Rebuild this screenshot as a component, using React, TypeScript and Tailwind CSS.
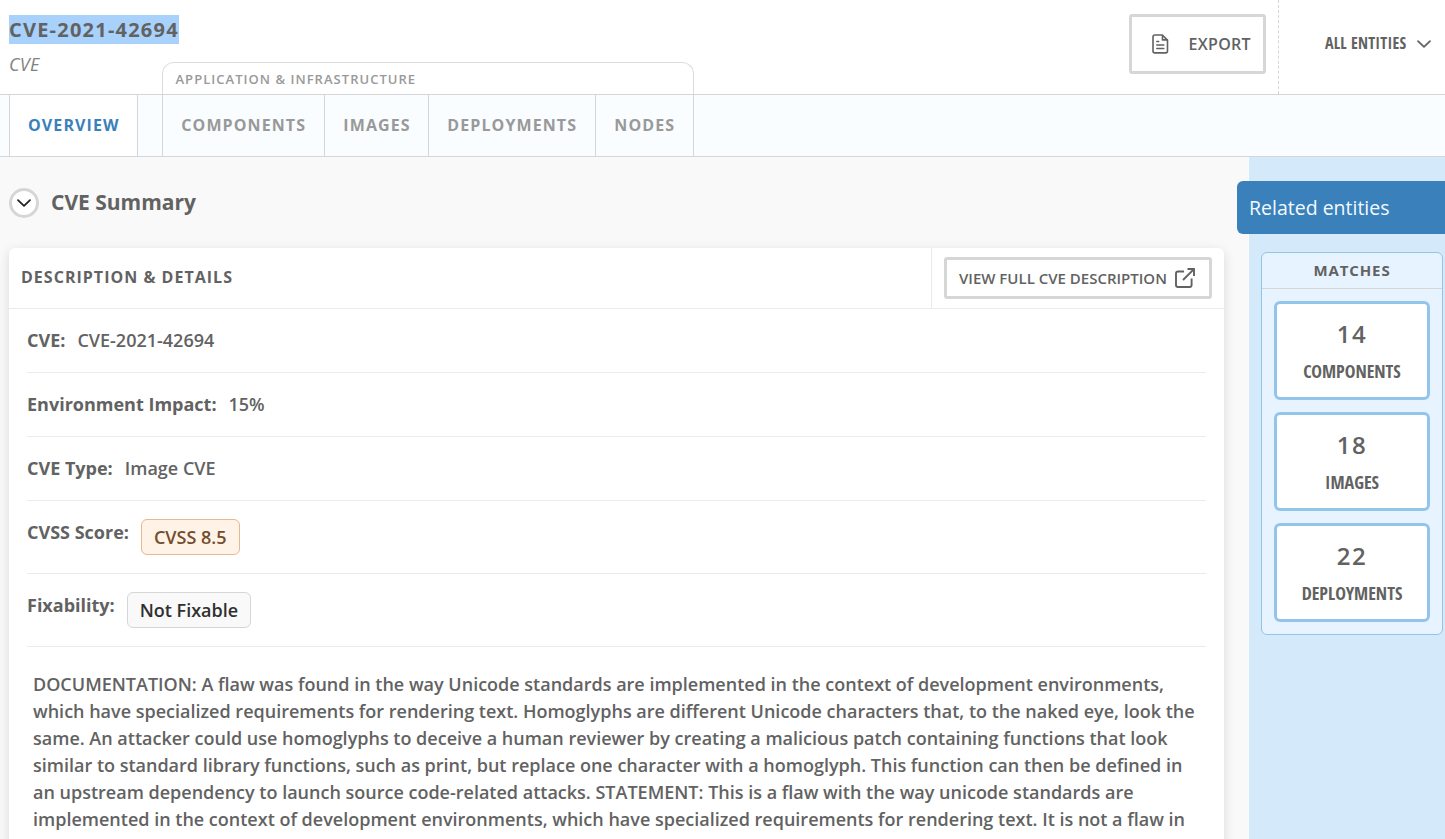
import React from "react";

const tabs = [
  { label: "COMPONENTS", width: "w-[162px]" },
  { label: "IMAGES", width: "w-[104px]" },
  { label: "DEPLOYMENTS", width: "w-[167px]" },
  { label: "NODES", width: "w-[98px]" },
];

const matches = [
  { count: 14, label: "COMPONENTS" },
  { count: 18, label: "IMAGES" },
  { count: 22, label: "DEPLOYMENTS" },
];

const description =
  "DOCUMENTATION: A flaw was found in the way Unicode standards are implemented in the context of development environments, which have specialized requirements for rendering text. Homoglyphs are different Unicode characters that, to the naked eye, look the same. An attacker could use homoglyphs to deceive a human reviewer by creating a malicious patch containing functions that look similar to standard library functions, such as print, but replace one character with a homoglyph. This function can then be defined in an upstream dependency to launch source code-related attacks. STATEMENT: This is a flaw with the way unicode standards are implemented in the context of development environments, which have specialized requirements for rendering text. It is not a flaw in";

function Chevron({ className }: { className: string }) {
  return (
    <svg viewBox="0 0 16 10" fill="none" stroke="currentColor" strokeLinecap="round" strokeLinejoin="round" className={className}>
      <path d="M2 2.200 8 7.900l6-5.700" strokeWidth="1.8" />
    </svg>
  );
}

function FileIcon() {
  return (
    <svg viewBox="0 0 18 20" width="18" height="20" fill="none" stroke="currentColor" strokeWidth="1.6" strokeLinecap="round" strokeLinejoin="round">
      <path d="M3.800 1h7.500l5.200 5.100v11a1.800 1.800 0 0 1-1.800 1.800H3.800A1.800 1.800 0 0 1 2 17.100V2.800A1.800 1.800 0 0 1 3.800 1Z" />
      <path d="M11.500 1.600v4.300h4.500" />
      <path d="M5.800 7.400h1.900M5.800 11h7M5.800 14.400h7" strokeWidth="1.5" />
    </svg>
  );
}

function ExternalIcon() {
  return (
    <svg viewBox="0 0 22 22" width="22" height="22" fill="none" stroke="currentColor" strokeWidth="1.9" strokeLinejoin="round">
      <path d="M10 4.500H4A2 2 0 0 0 2 6.500v11.500A2 2 0 0 0 4 20H15.600a2 2 0 0 0 2-2v-6.500" />
      <path d="M13.500 2h6.500v7M19.900 2.100 9 13" strokeLinejoin="miter" />
    </svg>
  );
}

function Row({ label, tall, children }: { label: string; tall?: boolean; children: React.ReactNode }) {
  return (
    <div className={`flex items-start border-b border-[#ebebeb] pt-[18px] leading-[27px] ${tall ? "h-[73px]" : "h-16"}`}>
      <span className="mr-3 font-bold">{label}</span>
      {children}
    </div>
  );
}

export default function App() {
  return (
    <div className="flex h-[839px] w-[1445px] flex-col overflow-hidden bg-white font-['Open_Sans',sans-serif] text-[#626262] antialiased">
      <header className="flex h-[95px] shrink-0 border-b border-[#d6d6d6]">
        <div className="w-[153px] shrink-0 pl-[9px] pt-[15px]">
          <h1 className="w-[170px] whitespace-nowrap bg-[#a8d1fb] text-[20px] font-bold leading-[29px] tracking-[1.22px]">CVE-2021-42694</h1>
          <p className="mt-[7px] text-[18px] italic leading-[27px] tracking-[0.2px] text-[#828282]">CVE</p>
        </div>
        <div className="ml-[9px] mt-[62px] flex h-8 w-[532px] items-center rounded-t-xl border border-b-0 border-[#dcdcdc] pl-[12.5px] pt-[2px] text-[13px] font-semibold tracking-[1.03px] text-[#999]">
          APPLICATION &amp; INFRASTRUCTURE
        </div>
        <div className="grow" />
        <button className="mr-3 mt-[14px] flex h-[60px] w-[137px] items-center rounded-[3px] border-3 border-[#d6d6d6] pl-[19px]">
          <FileIcon />
          <span className="ml-[19.500px] text-[16px] font-semibold tracking-[0.3px]">EXPORT</span>
        </button>
        <div className="flex h-[94px] w-[167px] items-center border-l border-dashed border-[#d6d6d6] pb-[8px] pl-[46px]">
          <span className="text-[16px] font-bold tracking-[0.18px] [font-family:'Open_Sans_Condensed','Open_Sans'] [font-stretch:75%]">ALL ENTITIES</span>
          <Chevron className="ml-[9.500px] mt-[2px] h-[10px] w-4" />
        </div>
      </header>

      <nav className="flex h-[62px] shrink-0 border-b border-[#d6d6d6] bg-[#f9fdff] pl-[9px] text-[16px] font-bold tracking-[1.1px] text-[#999]">
        <div className="mr-6 flex w-[129px] items-center border-x border-[#d6d6d6] bg-white pb-px pl-[18px] text-[#3a80ba]">OVERVIEW</div>
        <div className="flex border-l border-[#d6d6d6]">
          {tabs.map((t) => (
            <div key={t.label} className={`flex items-center border-r border-[#d6d6d6] pb-px pl-[18.300px] ${t.width}`}>
              {t.label}
            </div>
          ))}
        </div>
      </nav>

      <div className="flex min-h-0 grow">
        <main className="w-[1249px] shrink-0 overflow-hidden border-r border-[#fcfcfc] bg-[#f9f9f9] pl-[9px] pr-6 pt-[31px]">
          <div className="flex h-[30px] items-center">
            <button className="flex size-[30px] items-center justify-center rounded-full border-3 border-[#d6d6d6] bg-white text-[#222]">
              <Chevron className="h-[10px] w-4" />
            </button>
            <h2 className="ml-3 pb-[2px] text-[21px] font-bold leading-[28px]">CVE Summary</h2>
          </div>
          <section className="mt-[30px] h-[700px] rounded-md bg-white shadow-[0_3px_12px_rgba(0,0,0,0.13)]">
            <div className="flex h-[61px] border-b border-[#ebebeb]">
              <h3 className="grow pl-3 pt-[17px] text-[16px] font-bold leading-6 tracking-[1.02px]">DESCRIPTION &amp; DETAILS</h3>
              <div className="w-[293px] border-l border-[#ebebeb] pl-3 pt-[9px]">
                <button className="flex h-[42px] w-[268px] items-center rounded-[3px] border-3 border-[#d6d6d6] pl-3 text-[15px] font-semibold">
                  VIEW FULL CVE DESCRIPTION
                  <span className="ml-[7px]"><ExternalIcon /></span>
                </button>
              </div>
            </div>
            <div className="px-[18px] text-[18px] font-semibold">
              <Row label="CVE:">CVE-2021-42694</Row>
              <Row label="Environment Impact:">15%</Row>
              <Row label="CVE Type:">Image CVE</Row>
              <Row label="CVSS Score:" tall>
                <span className="flex h-9 items-center rounded-md border border-[#e8b98f] bg-[#fff2e6] px-3 text-[#744d2e]">CVSS 8.5</span>
              </Row>
              <Row label="Fixability:" tall>
                <span className="flex h-9 items-center rounded-md border border-[#d6d6d6] bg-[#f9f9f9] px-3 text-[#303030]">Not Fixable</span>
              </Row>
              <p className="px-[6px] pt-6 leading-[27px]">{description}</p>
            </div>
          </section>
        </main>

        <aside className="grow bg-[#d4e9fa] pt-6">
          <div className="-ml-3 flex h-[53px] items-center rounded-l-md bg-[#3a80ba] pl-3 text-[19.500px] text-[#f3faff]">Related entities</div>
          <div className="ml-3 mt-[18px] h-[383px] w-[182px] rounded-md border border-[#93c4ea] bg-[#e7f4ff]">
            <div className="h-9 border-b border-[#d6d6d6] text-center text-[15px] font-bold leading-[35px] tracking-[0.9px]">MATCHES</div>
            <div className="flex flex-col gap-3 p-3">
              {matches.map((m) => (
                <div key={m.label} className="flex h-[99px] w-[156px] flex-col items-center rounded-md border-3 border-[#93c4ea] bg-white pt-[12px]">
                  <div className="text-[24px] font-semibold leading-9 tracking-[1.6px]">{m.count}</div>
                  <div className="mt-[6px] text-[18px] font-bold leading-[27px] [font-family:'Open_Sans_Condensed','Open_Sans'] [font-stretch:75%]">{m.label}</div>
                </div>
              ))}
            </div>
          </div>
        </aside>
      </div>
    </div>
  );
}
